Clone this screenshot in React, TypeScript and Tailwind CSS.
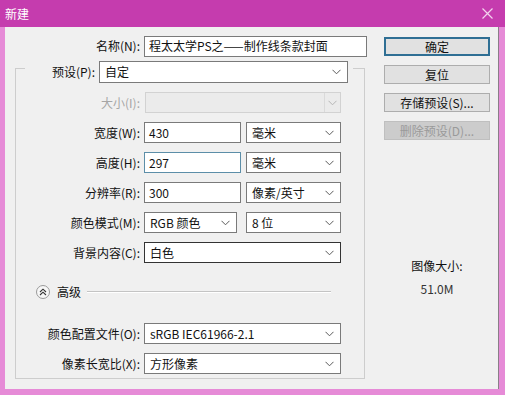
import React from "react";

const font = { fontFamily: '"Noto Sans CJK SC", "Noto Sans", sans-serif' };

function Chevron({ color = "#5a5a5a" }: { color?: string }) {
  return (
    <svg width="9" height="6" viewBox="0 0 9 6" className="shrink-0">
      <path d="M0.5 0.8 L4.5 4.8 L8.5 0.8" fill="none" stroke={color} strokeWidth="1" />
    </svg>
  );
}

function Select({
  value,
  width,
  border = "border-[#7a7a7a]",
}: {
  value: string;
  width: string;
  border?: string;
}) {
  return (
    <div className={`${width} ${border} flex h-[21px] items-center justify-between border bg-white pl-[5px] pr-[6px]`}>
      <span className="leading-none">{value}</span>
      <Chevron />
    </div>
  );
}

function Input({ value, width, border = "border-[#7a7a7a]" }: { value: string; width: string; border?: string }) {
  return (
    <div className={`${width} ${border} flex h-[21px] items-center border bg-white pl-[4px]`}>
      <span className="leading-none">{value}</span>
    </div>
  );
}

function Row({ label, children, muted }: { label: string; children: React.ReactNode; muted?: boolean }) {
  return (
    <div className="flex h-[21px] items-center gap-[4px]">
      <div className={`w-[124px] text-right ${muted ? "text-[#a6a6a6]" : ""}`}>{label}</div>
      <div className="flex items-center">{children}</div>
    </div>
  );
}

function Button({ label, primary, disabled }: { label: string; primary?: boolean; disabled?: boolean }) {
  let cls = "border border-[#adadad] bg-[#e1e1e1]";
  if (primary) cls = "border-2 border-[#2f6f94] bg-[#e1e1e1]";
  if (disabled) cls = "border border-[#bfbfbf] bg-[#cccccc] text-[#9a9a9a]";
  return <div className={`${cls} flex h-[19px] w-[106px] items-center justify-center leading-none`}>{label}</div>;
}

export default function App() {
  return (
    <div className="flex h-[395px] w-[505px] flex-col overflow-hidden bg-[#e68bd7] text-[12px] text-[#111]" style={font}>
      <div className="flex h-[27px] shrink-0 items-center justify-between bg-[#c53cae] pl-[5px] pr-[12px] text-white">
        <span>新建</span>
        <svg width="11" height="11" viewBox="0 0 11 11">
          <path d="M0.5 0.5 L10.5 10.5 M10.5 0.5 L0.5 10.5" stroke="#f3d3ee" strokeWidth="1.2" />
        </svg>
      </div>

      <div className="ml-[5px] mr-[6px] mb-[6px] flex flex-1 gap-[17px] border-r border-[#8a7f88] bg-[#f0f0f0] pl-[10px] pt-[9px]">
        <div className="flex w-[352px] flex-col">
          <div className="flex h-[20px] items-center gap-[4px]">
            <div className="w-[125px] text-right">名称(N):</div>
            <Input value="程太太学PS之——制作线条款封面" width="w-[223px]" />
          </div>

          <div className="mt-[12px] flex h-[311px] w-[350px] flex-col border border-[#cdcdcd]">
            <div className="-mt-[8px] ml-[9px] flex w-[328px] items-center gap-[4px] bg-[#f0f0f0]">
              <div className="flex-1 text-right">预设(P):</div>
              <div className="mr-[5px]">
                <div className="flex h-[22px] w-[249px] items-center justify-between border border-[#7a7a7a] bg-white pl-[5px] pr-[6px]">
                  <span className="leading-none">自定</span>
                  <Chevron />
                </div>
              </div>
            </div>

            <div className="mt-[9px] flex flex-col gap-[9px]">
              <Row label="大小(I):" muted>
                <div className="ml-[1px] flex h-[21px] w-[196px] border border-[#d2d2d2] bg-[#ebebeb]">
                  <div className="flex-1" />
                  <div className="flex w-[16px] items-center justify-center border-l border-[#dadada]">
                    <Chevron color="#b5b5b5" />
                  </div>
                </div>
              </Row>
              <Row label="宽度(W):">
                <Input value="430" width="w-[97px]" />
                <div className="ml-[5px]">
                  <Select value="毫米" width="w-[95px]" />
                </div>
              </Row>
              <Row label="高度(H):">
                <Input value="297" width="w-[97px]" border="border-[#5c8ea8]" />
                <div className="ml-[5px]">
                  <Select value="毫米" width="w-[95px]" />
                </div>
              </Row>
              <Row label="分辨率(R):">
                <Input value="300" width="w-[97px]" />
                <div className="ml-[5px]">
                  <Select value="像素/英寸" width="w-[95px]" />
                </div>
              </Row>
              <Row label="颜色模式(M):">
                <Select value="RGB 颜色" width="w-[93px]" />
                <div className="ml-[9px]">
                  <Select value="8 位" width="w-[95px]" />
                </div>
              </Row>
              <Row label="背景内容(C):">
                <Select value="白色" width="w-[197px]" border="border-[#333333]" />
              </Row>
            </div>

            <div className="mt-[20px] flex items-center pl-[20px]">
              <div className="flex h-[14px] w-[14px] items-center justify-center rounded-full border border-[#9a9a9a] bg-[#f7f7f7]">
                <svg width="8" height="8" viewBox="0 0 8 8">
                  <path d="M1 4 L4 1.2 L7 4 M1 7 L4 4.2 L7 7" fill="none" stroke="#333" strokeWidth="1.1" />
                </svg>
              </div>
              <span className="ml-[7px]">高级</span>
              <div className="ml-[6px] h-[2px] w-[244px] border-t border-b border-t-[#c4c4c4] border-b-white" />
            </div>

            <div className="mt-[22px] flex flex-col gap-[9px]">
              <Row label="颜色配置文件(O):">
                <Select value="sRGB IEC61966-2.1" width="w-[197px]" />
              </Row>
              <Row label="像素长宽比(X):">
                <Select value="方形像素" width="w-[197px]" />
              </Row>
            </div>
          </div>
        </div>

        <div className="mt-[1px] flex w-[106px] flex-col">
          <div className="flex flex-col gap-[9px]">
            <Button label="确定" primary />
            <Button label="复位" />
            <Button label="存储预设(S)..." />
            <Button label="删除预设(D)..." disabled />
          </div>
          <div className="mt-[117px] text-center">图像大小:</div>
          <div className="mt-[5px] text-center text-[#333]">51.0M</div>
        </div>
      </div>
    </div>
  );
}
